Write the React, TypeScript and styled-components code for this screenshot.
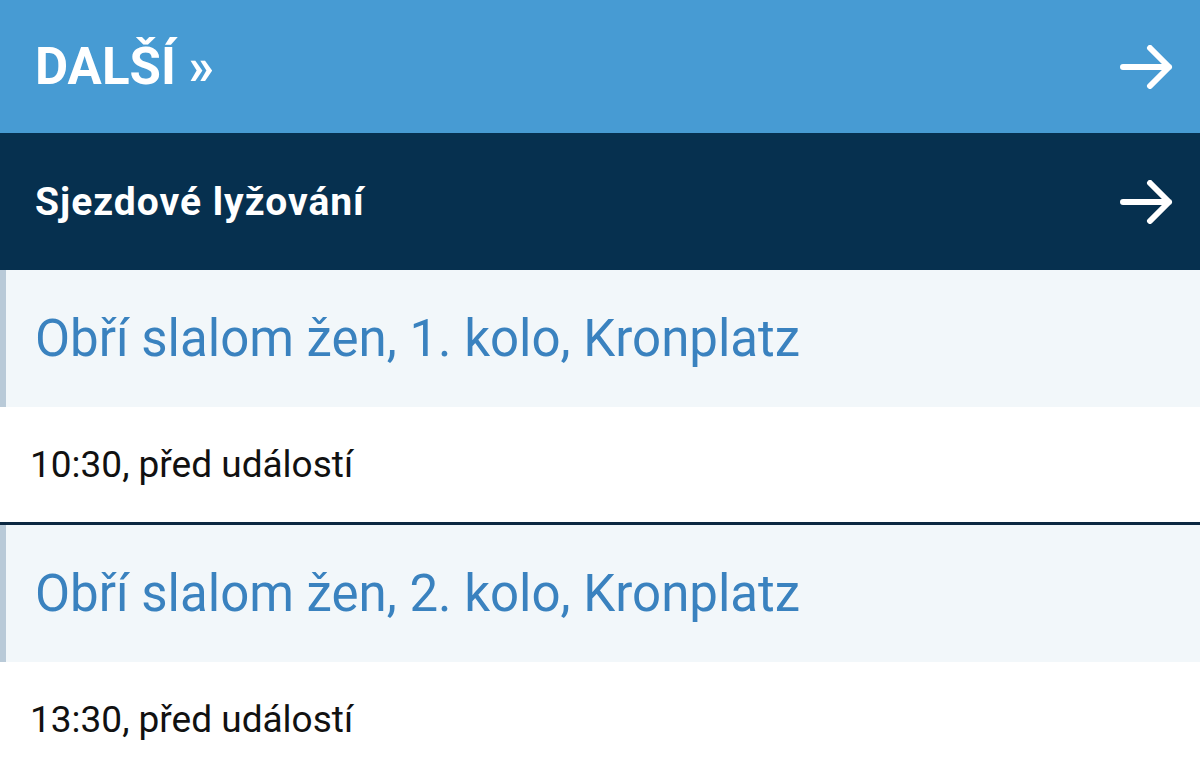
import React from 'react';
import styled, {createGlobalStyle} from 'styled-components';

const GlobalStyle = createGlobalStyle`
  html, body {
    margin: 0;
    padding: 0;
    background: #fff;
    font-family: Roboto, "Noto Sans", "Liberation Sans", sans-serif;
  }
`;

type Event = {title: string; time: string};

const events: Event[] = [
  {title: 'Obří slalom žen, 1. kolo, Kronplatz', time: '10:30, před událostí'},
  {title: 'Obří slalom žen, 2. kolo, Kronplatz', time: '13:30, před událostí'},
];

function Arrow() {
  return (
    <ArrowIcon width="54" height="44" viewBox="0 0 54 44" fill="none">
      <path d="M3 22H49M30 3L49 22L30 41" stroke="#fff" strokeWidth="6" strokeLinecap="round" strokeLinejoin="round" />
    </ArrowIcon>
  );
}

function App() {
  return (
    <Page>
      <GlobalStyle />
      <MainBar>
        <MainTitle>DALŠÍ »</MainTitle>
        <Arrow />
      </MainBar>
      <SportBar>
        <SportTitle>Sjezdové lyžování</SportTitle>
        <Arrow />
      </SportBar>
      {events.map((ev, idx) => (
        <EventBlock key={idx} last={idx === events.length - 1}>
          <EventHead>
            <EventTitle>{ev.title}</EventTitle>
          </EventHead>
          <EventInfo>{ev.time}</EventInfo>
        </EventBlock>
      ))}
    </Page>
  );
}

export default App;

const Page = styled.div`
  width: 1200px;
  height: 771px;
  overflow: hidden;
  display: flex;
  flex-direction: column;
`

const Bar = styled.div`
  display: flex;
  align-items: center;
  justify-content: space-between;
  padding: 0 26px 0 35px;
  flex-shrink: 0;
`

const MainBar = styled(Bar)`
  height: 133px;
  background-color: #479bd3;
`

const SportBar = styled(Bar)`
  height: 137px;
  background-color: #06304f;
`

const MainTitle = styled.h1`
  margin: 0;
  color: #fff;
  font-size: 51px;
  font-weight: 700;
`

const SportTitle = styled.h2`
  margin: 0;
  color: #fff;
  font-size: 39px;
  font-weight: 700;
  letter-spacing: 1px;
`

const ArrowIcon = styled.svg`
  display: block;
`

const EventBlock = styled.div<{last?: boolean}>`
  display: flex;
  flex-direction: column;
  flex-shrink: 0;
  border-bottom: ${p => (p.last ? 'none' : '3px solid #0c2841')};
`

const EventHead = styled.div`
  height: 137px;
  display: flex;
  align-items: center;
  background-color: #f2f7fa;
  border-left: 6px solid #b9cad8;
  padding-left: 29px;
  box-sizing: border-box;
`

const EventTitle = styled.h3`
  margin: 0;
  color: #3a82bf;
  font-size: 51px;
  font-weight: 400;
`

const EventInfo = styled.div`
  height: 115px;
  display: flex;
  align-items: center;
  padding-left: 30px;
  color: #111;
  font-size: 37px;
  background: #fff;
`
